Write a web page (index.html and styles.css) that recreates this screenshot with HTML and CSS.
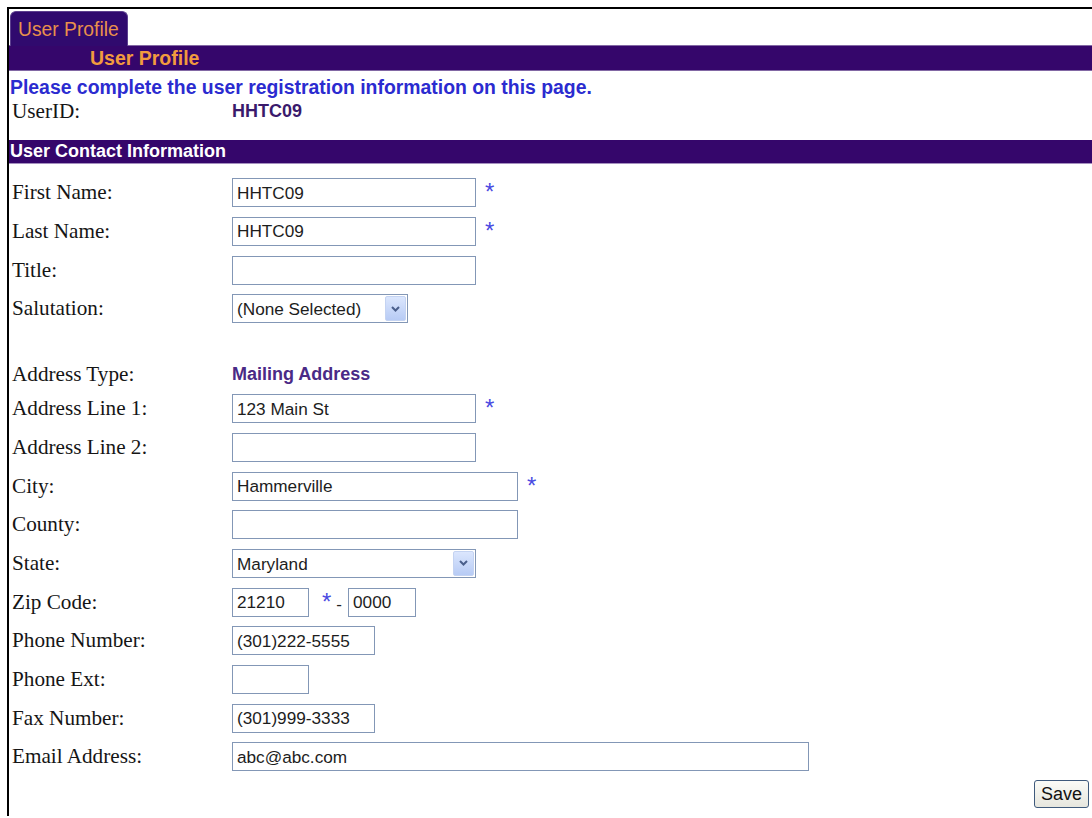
FILE: index.html
```html
<!DOCTYPE html>
<html lang="en">
<head>
<meta charset="utf-8">
<title>User Profile</title>
<link rel="stylesheet" href="styles.css">
</head>
<body>
<div class="frame">
  <div class="tabs">
    <span class="tab">User Profile</span>
  </div>
  <div class="bar bar-title">User Profile</div>
  <p class="notice">Please complete the user registration information on this page.</p>
  <div class="row row-static">
    <span class="label">UserID:</span>
    <span class="value">HHTC09</span>
  </div>
  <div class="bar bar-section">User Contact Information</div>

  <form class="form">
    <div class="row">
      <label class="label">First Name:</label>
      <div class="field"><input class="w-md" type="text" value="HHTC09"><span class="req">*</span></div>
    </div>
    <div class="row">
      <label class="label">Last Name:</label>
      <div class="field"><input class="w-md" type="text" value="HHTC09"><span class="req">*</span></div>
    </div>
    <div class="row">
      <label class="label">Title:</label>
      <div class="field"><input class="w-md" type="text" value=""></div>
    </div>
    <div class="row">
      <label class="label">Salutation:</label>
      <div class="field">
        <span class="select-wrap w-sal">
          <select><option>(None Selected)</option></select>
          <span class="select-btn"><svg width="9" height="6" viewBox="0 0 9 6"><path d="M1 1 L4.5 4.5 L8 1" fill="none" stroke="#4a5f8c" stroke-width="2"/></svg></span>
        </span>
      </div>
    </div>
    <div class="spacer"></div>
    <div class="row row-short">
      <span class="label">Address Type:</span>
      <span class="value value-type">Mailing Address</span>
    </div>
    <div class="row">
      <label class="label">Address Line 1:</label>
      <div class="field"><input class="w-md" type="text" value="123 Main St"><span class="req">*</span></div>
    </div>
    <div class="row">
      <label class="label">Address Line 2:</label>
      <div class="field"><input class="w-md" type="text" value=""></div>
    </div>
    <div class="row">
      <label class="label">City:</label>
      <div class="field"><input class="w-lg" type="text" value="Hammerville"><span class="req">*</span></div>
    </div>
    <div class="row">
      <label class="label">County:</label>
      <div class="field"><input class="w-lg" type="text" value=""></div>
    </div>
    <div class="row">
      <label class="label">State:</label>
      <div class="field">
        <span class="select-wrap w-md">
          <select><option>Maryland</option></select>
          <span class="select-btn"><svg width="9" height="6" viewBox="0 0 9 6"><path d="M1 1 L4.5 4.5 L8 1" fill="none" stroke="#4a5f8c" stroke-width="2"/></svg></span>
        </span>
      </div>
    </div>
    <div class="row">
      <label class="label">Zip Code:</label>
      <div class="field">
        <input class="w-xs" type="text" value="21210"><span class="req req-zip">*</span><span class="dash">-</span><input class="w-ext" type="text" value="0000">
      </div>
    </div>
    <div class="row">
      <label class="label">Phone Number:</label>
      <div class="field"><input class="w-sm" type="text" value="(301)222-5555"></div>
    </div>
    <div class="row">
      <label class="label">Phone Ext:</label>
      <div class="field"><input class="w-xs" type="text" value=""></div>
    </div>
    <div class="row">
      <label class="label">Fax Number:</label>
      <div class="field"><input class="w-sm" type="text" value="(301)999-3333"></div>
    </div>
    <div class="row">
      <label class="label">Email Address:</label>
      <div class="field"><input class="w-xl" type="text" value="abc@abc.com"></div>
    </div>
    <div class="actions">
      <button type="button" class="btn">Save</button>
    </div>
  </form>
</div>
</body>
</html>
```

FILE: styles.css
```css
html, body {
  margin: 0;
  padding: 0;
  background: #ffffff;
}

body {
  font-family: "Liberation Serif", "Times New Roman", serif;
  color: #111111;
  overflow: hidden;
}

.frame {
  margin: 7px 0 0 7px;
  border-top: 2px solid #000000;
  border-left: 2px solid #000000;
  min-height: calc(100vh - 9px);
  box-sizing: border-box;
}

/* tab strip */
.tabs {
  display: flex;
  padding: 2px 0 0 1px;
}

.tab {
  position: relative;
  z-index: 1;
  display: flex;
  align-items: center;
  box-sizing: border-box;
  height: 35px;
  margin-bottom: -1px;
  padding: 2px 8px 0 7px;
  background: #300a6e;
  border: 1px solid #5c3f8e;
  border-bottom: 0;
  border-radius: 6px 6px 0 0;
  color: #e9914b;
  font: 19.3px "Liberation Sans", Arial, sans-serif;
}

/* title and section bars */
.bar {
  background: #35066b;
  font: bold 18px "Liberation Sans", Arial, sans-serif;
}

.bar-title {
  height: 24px;
  line-height: 25px;
  padding-left: 81px;
  border-top: 1px solid #8268a4;
  border-bottom: 1px solid #8268a4;
  color: #f29b3e;
  font-size: 19.5px;
}

.bar-section {
  margin-top: 17px;
  height: 23px;
  line-height: 23px;
  padding-left: 1px;
  border-bottom: 1px solid #a590bf;
  color: #ffffff;
}

.notice {
  margin: 6px 0 0 1px;
  font: bold 19.4px/20px "Liberation Sans", Arial, sans-serif;
  color: #2b2bd0;
}

/* form rows */
.row {
  display: flex;
  align-items: center;
  height: 38.67px;
  padding-left: 3px;
}

.row-static {
  height: 24px;
  margin-top: 2px;
}

.row-short {
  height: 29.34px;
}

.spacer {
  height: 32px;
}

.label {
  flex: none;
  width: 220px;
  font-size: 21.2px;
  color: #151515;
}

.value {
  font: bold 18px "Liberation Sans", Arial, sans-serif;
  color: #3a1a6c;
}

.value-type {
  color: #4a2a86;
}

.form {
  margin: 0;
  padding-top: 9.5px;
}

.field {
  display: flex;
  align-items: center;
  height: 29px;
}

input,
select {
  box-sizing: border-box;
  height: 29px;
  margin: 0;
  border: 1px solid #8397b6;
  border-radius: 0;
  background: #ffffff;
  color: #1d1d1d;
  font: 17.2px "Liberation Sans", Arial, sans-serif;
  outline: none;
}

input {
  padding: 1px 4px 0;
}

.w-xs  { width: 77px; }
.w-ext { width: 68px; }
.w-sm  { width: 143px; }
.w-md  { width: 244px; }
.w-lg  { width: 286px; }
.w-xl  { width: 577px; }
.w-sal { width: 176px; }

/* required-field marker */
.req {
  align-self: flex-start;
  margin: 2px 0 0 9px;
  font: 24px/24px "Liberation Sans", Arial, sans-serif;
  color: #4a4ae2;
}

.req-zip {
  margin-left: 13px;
}

.dash {
  margin: 6px 6px 0 5px;
  font: 17px "Liberation Sans", Arial, sans-serif;
  color: #222222;
}

/* drop-down with the arrow button drawn over its right end */
.select-wrap {
  position: relative;
  display: inline-flex;
}

.select-wrap select {
  width: 100%;
  padding: 1px 26px 0 4px;
  -webkit-appearance: none;
  appearance: none;
}

.select-btn {
  position: absolute;
  top: 2px;
  right: 2px;
  bottom: 2px;
  width: 21px;
  display: flex;
  align-items: center;
  justify-content: center;
  box-sizing: border-box;
  border: 1px solid #c4d3f2;
  border-radius: 2px;
  background: linear-gradient(#dbe6fd, #b7cbf5);
  pointer-events: none;
}

.actions {
  display: flex;
  justify-content: flex-end;
  padding: 4px 3px 0 0;
}

.btn {
  height: 28px;
  padding: 0 6px;
  border: 1px solid #3f5a7c;
  border-radius: 3px;
  background: linear-gradient(#fbfbf7, #e6e6de);
  color: #111111;
  font: 18px "Liberation Sans", Arial, sans-serif;
}
```
